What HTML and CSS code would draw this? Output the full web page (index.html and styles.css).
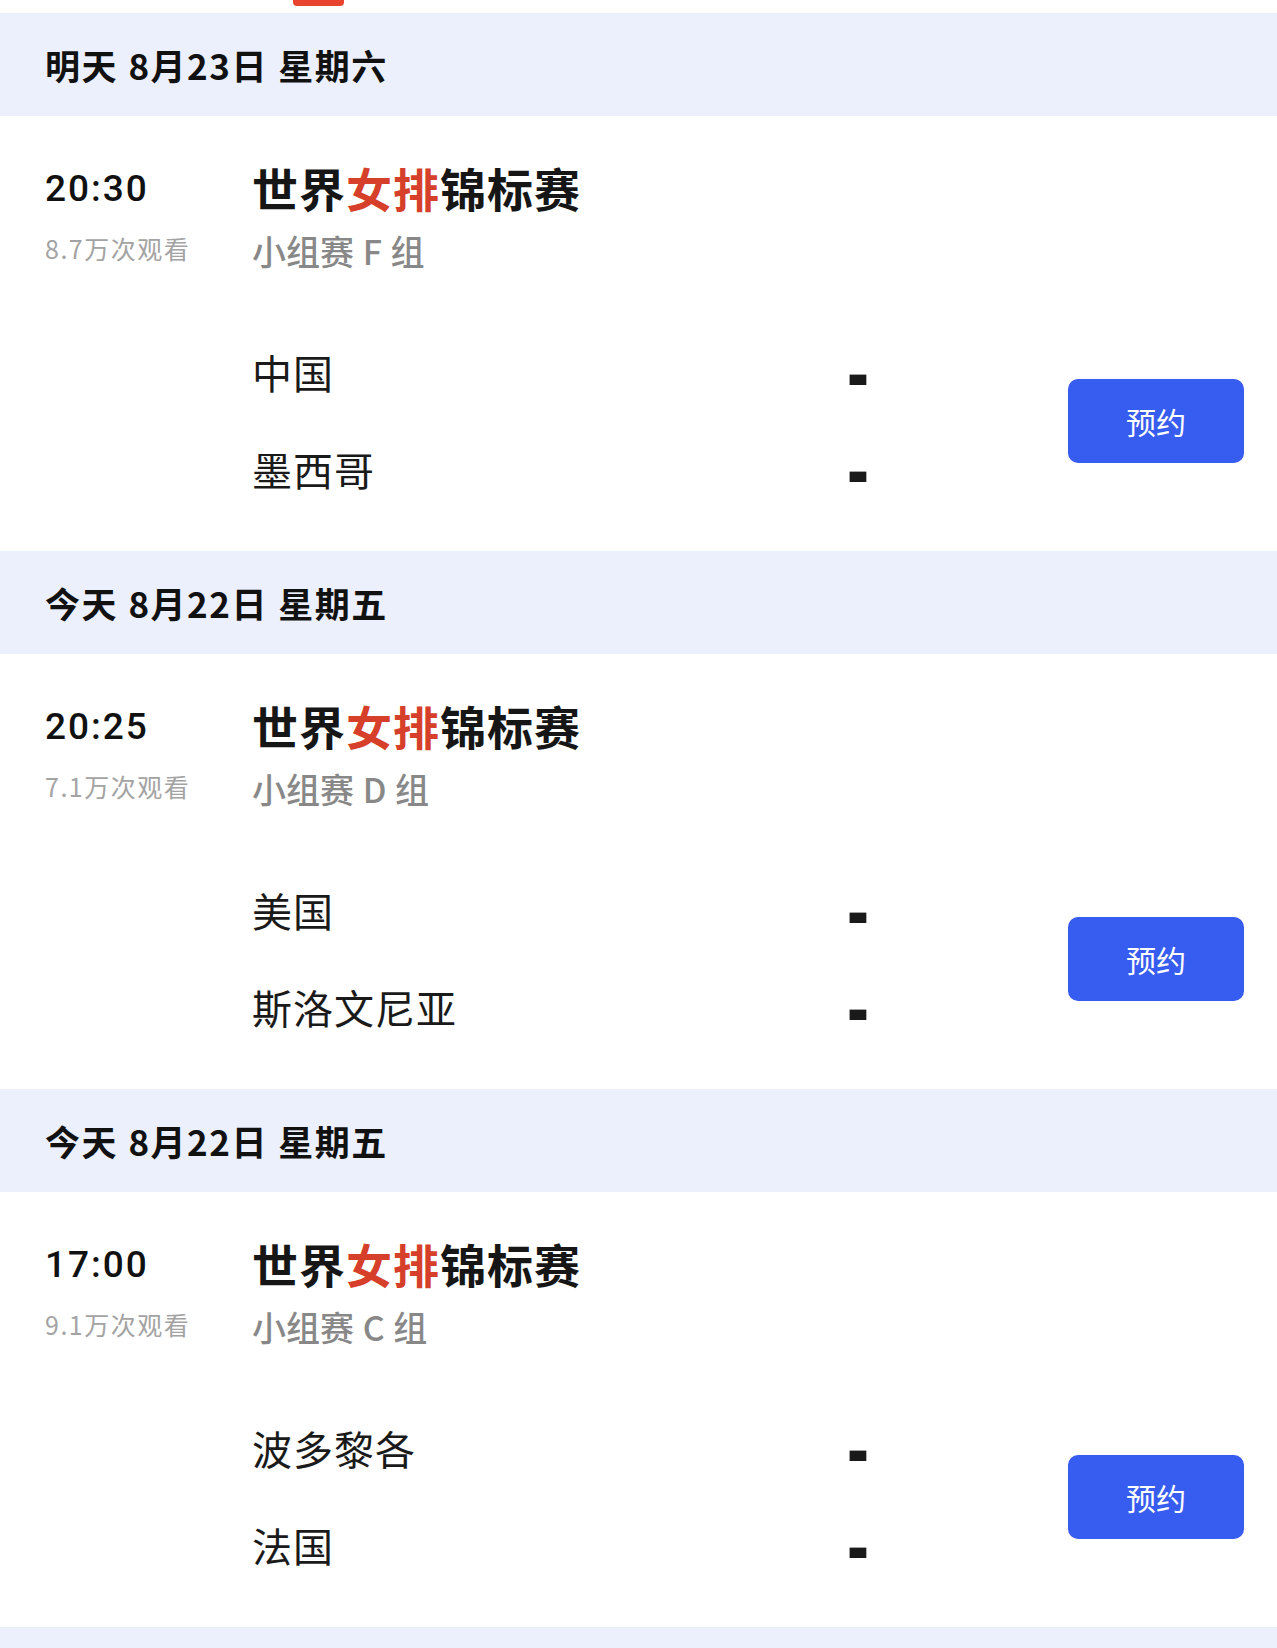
FILE: index.html
```html
<!DOCTYPE html>
<html lang="zh-CN">
<head>
  <meta charset="UTF-8">
  <title>赛程</title>
  <meta name="viewport" content="width=device-width, initial-scale=1.0">
  <link rel="stylesheet" href="styles.css">
</head>
<body>
  <div class="page">
    <div class="tabs"><div class="tab-line"></div></div>

    <div class="day-head">明天 8月23日 星期六</div>
    <div class="match">
      <div class="top">
        <div class="when">
          <div class="time">20:30</div>
          <div class="views">8.7万次观看</div>
        </div>
        <div class="info">
          <div class="title">世界<em>女排</em>锦标赛</div>
          <div class="stage">小组赛 F 组</div>
        </div>
      </div>
      <div class="bottom">
        <div class="teams">
          <div class="team"><span class="name">中国</span><span class="score">-</span></div>
          <div class="team"><span class="name">墨西哥</span><span class="score">-</span></div>
        </div>
        <button class="btn">预约</button>
      </div>
    </div>

    <div class="day-head">今天 8月22日 星期五</div>
    <div class="match">
      <div class="top">
        <div class="when">
          <div class="time">20:25</div>
          <div class="views">7.1万次观看</div>
        </div>
        <div class="info">
          <div class="title">世界<em>女排</em>锦标赛</div>
          <div class="stage">小组赛 D 组</div>
        </div>
      </div>
      <div class="bottom">
        <div class="teams">
          <div class="team"><span class="name">美国</span><span class="score">-</span></div>
          <div class="team"><span class="name">斯洛文尼亚</span><span class="score">-</span></div>
        </div>
        <button class="btn">预约</button>
      </div>
    </div>

    <div class="day-head">今天 8月22日 星期五</div>
    <div class="match">
      <div class="top">
        <div class="when">
          <div class="time">17:00</div>
          <div class="views">9.1万次观看</div>
        </div>
        <div class="info">
          <div class="title">世界<em>女排</em>锦标赛</div>
          <div class="stage">小组赛 C 组</div>
        </div>
      </div>
      <div class="bottom">
        <div class="teams">
          <div class="team"><span class="name">波多黎各</span><span class="score">-</span></div>
          <div class="team"><span class="name">法国</span><span class="score">-</span></div>
        </div>
        <button class="btn">预约</button>
      </div>
    </div>

    <div class="day-head"></div>
  </div>
</body>
</html>
```
FILE: styles.css
```css
* {
  box-sizing: border-box;
}
body {
  margin: 0;
  background: #fff;
  color: #111;
  font-family: "Noto Sans CJK SC", "Noto Sans", sans-serif;
}
.page {
  height: 1648px;
  overflow: hidden;
}
.tabs {
  height: 13px;
}
.tab-line {
  width: 51px;
  height: 6px;
  margin-left: 293px;
  background: #e8432f;
  border-radius: 0 0 4px 4px;
}
.day-head {
  height: 103px;
  padding-left: 45px;
  display: flex;
  align-items: center;
  background: #ecf0fd;
  font-size: 35px;
  font-weight: 700;
  letter-spacing: 1.5px;
  word-spacing: 1px;
  color: #111;
}
.match {
  height: 435px;
  padding: 43px 33px 0 45px;
}
.top {
  display: flex;
}
.when {
  width: 207px;
  padding-top: 8px;
}
.time {
  font-family: Roboto, sans-serif;
  font-size: 37px;
  font-weight: 500;
  letter-spacing: 2px;
  line-height: 44px;
}
.views {
  margin-top: 22px;
  font-size: 25px;
  letter-spacing: 1.5px;
  line-height: 30px;
  color: #a3a3a3;
}
.title {
  font-size: 46px;
  font-weight: 700;
  line-height: 56px;
  letter-spacing: 1px;
  color: #161616;
}
.title em {
  font-style: normal;
  color: #d6402a;
}
.stage {
  margin-top: 16px;
  font-size: 34px;
  font-weight: 500;
  line-height: 40px;
  word-spacing: 1px;
  color: #888;
}
.bottom {
  display: flex;
  align-items: center;
  margin-top: 76px;
}
.teams {
  flex: 1;
  margin-left: 207px;
}
.team {
  display: flex;
  align-items: center;
  height: 50px;
  font-size: 40px;
  letter-spacing: 1px;
  color: #1a1a1a;
}
.team + .team {
  margin-top: 47px;
}
.name {
  width: 595px;
}
.score {
  display: inline-block;
  font-family: "Liberation Sans", sans-serif;
  font-weight: 700;
  font-size: 40px;
  transform: scale(1.65, 2.2);
  transform-origin: left center;
}
.btn {
  width: 176px;
  height: 84px;
  border: none;
  border-radius: 10px;
  background: #375cf0;
  color: #fff;
  font-family: inherit;
  font-size: 30px;
  cursor: pointer;
}
```
